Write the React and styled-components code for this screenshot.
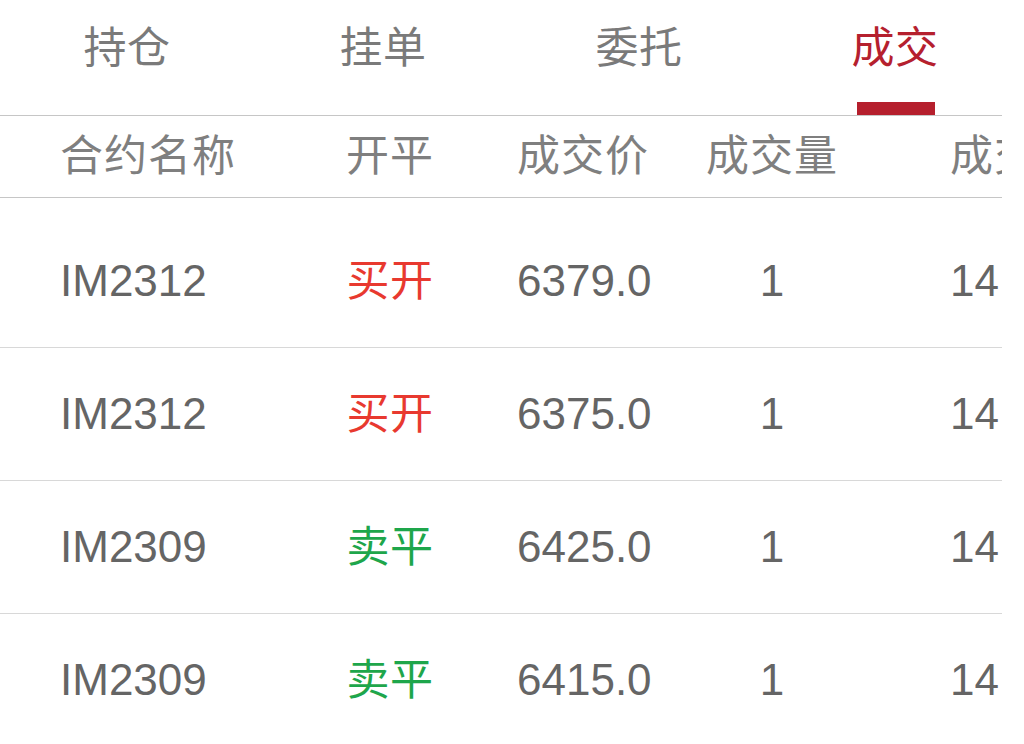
import styled, { createGlobalStyle } from "styled-components";

const GlobalStyle = createGlobalStyle`
    html, body {
        margin: 0;
        padding: 0;
        background: #ffffff;
        overflow: hidden;
    }
    body {
        font-family: "Liberation Sans", "Noto Sans CJK SC", sans-serif;
    }
`;

const tabs = ["持仓", "挂单", "委托", "成交"];

const columns = [
    { key: "name", title: "合约名称", width: 240, align: "left", pad: 0 },
    { key: "side", title: "开平", width: 180, align: "center", pad: 0 },
    { key: "price", title: "成交价", width: 180, align: "left", pad: 37 },
    { key: "qty", title: "成交量", width: 224, align: "center", pad: 0 },
    { key: "time", title: "成交时间", width: 240, align: "left", pad: 66 },
];

const trades = [
    { name: "IM2312", side: "买开", buy: true, price: "6379.0", qty: "1", time: "14:21:36" },
    { name: "IM2312", side: "买开", buy: true, price: "6375.0", qty: "1", time: "14:10:02" },
    { name: "IM2309", side: "卖平", buy: false, price: "6425.0", qty: "1", time: "14:05:47" },
    { name: "IM2309", side: "卖平", buy: false, price: "6415.0", qty: "1", time: "14:01:19" },
];

const App = () => {
    return (
        <>
            <GlobalStyle />
            <Page>
                <TabBar>
                    {tabs.map((tab, index) => (
                        <Tab key={tab} $active={index === tabs.length - 1}>
                            <TabLabel>{tab}</TabLabel>
                            <TabIndicator $active={index === tabs.length - 1} />
                        </Tab>
                    ))}
                </TabBar>
                <Table>
                    <HeaderRow>
                        {columns.map((col) => (
                            <Cell key={col.key} $width={col.width} $align={col.align} $pad={col.pad}>
                                {col.title}
                            </Cell>
                        ))}
                    </HeaderRow>
                    <Body>
                        {trades.map((trade, index) => (
                            <Row key={index}>
                                <Cell $width={240} $align="left">{trade.name}</Cell>
                                <SideCell $width={180} $align="center" $buy={trade.buy}>{trade.side}</SideCell>
                                <Cell $width={180} $align="left" $pad={37}>{trade.price}</Cell>
                                <Cell $width={224} $align="center">{trade.qty}</Cell>
                                <Cell $width={240} $align="left" $pad={66}>{trade.time}</Cell>
                            </Row>
                        ))}
                    </Body>
                </Table>
            </Page>
        </>
    );
};

export default App;

const Page = styled.div`
    width: 1024px;
    height: 744px;
    overflow: hidden;
    background: #ffffff;
`,
TabBar = styled.div`
    display: flex;
    width: 1024px;
    height: 115px;
`,
Tab = styled.div`
    flex: 0 0 256px;
    display: flex;
    flex-direction: column;
    align-items: center;
    justify-content: space-between;
    box-sizing: border-box;
    padding-top: 26px;
    padding-right: 2px;
    color: ${({ $active }) => ($active ? "#b5202e" : "#7a7a7a")};
`,
TabLabel = styled.span`
    font-size: 43px;
    line-height: 44px;
    letter-spacing: 0.5px;
`,
TabIndicator = styled.div`
    width: 78px;
    height: 13px;
    margin-left: 2px;
    background: ${({ $active }) => ($active ? "#b51f2d" : "transparent")};
`,
Table = styled.div`
    width: 1002px;
    overflow: hidden;
    border-top: 1px solid #c6c6c6;
`,
HeaderRow = styled.div`
    display: flex;
    align-items: center;
    height: 81px;
    padding-left: 60px;
    border-bottom: 1px solid #c6c6c6;
    color: #7f7f7f;
    font-size: 43px;
    letter-spacing: 1px;
    white-space: nowrap;
`,
Body = styled.div`
    padding-top: 17px;
`,
Row = styled.div`
    display: flex;
    align-items: center;
    height: 132px;
    padding-left: 60px;
    border-bottom: 1px solid #d8d8d8;
    color: #656565;
    font-size: 44px;
    white-space: nowrap;
`,
Cell = styled.div`
    flex: 0 0 ${({ $width }) => $width}px;
    box-sizing: border-box;
    padding-left: ${({ $pad }) => $pad || 0}px;
    text-align: ${({ $align }) => $align};
    line-height: 1;
`,
SideCell = styled(Cell)`
    color: ${({ $buy }) => ($buy ? "#e8392f" : "#1ea64b")};
    font-size: 43px;
    letter-spacing: 0.5px;
`;
